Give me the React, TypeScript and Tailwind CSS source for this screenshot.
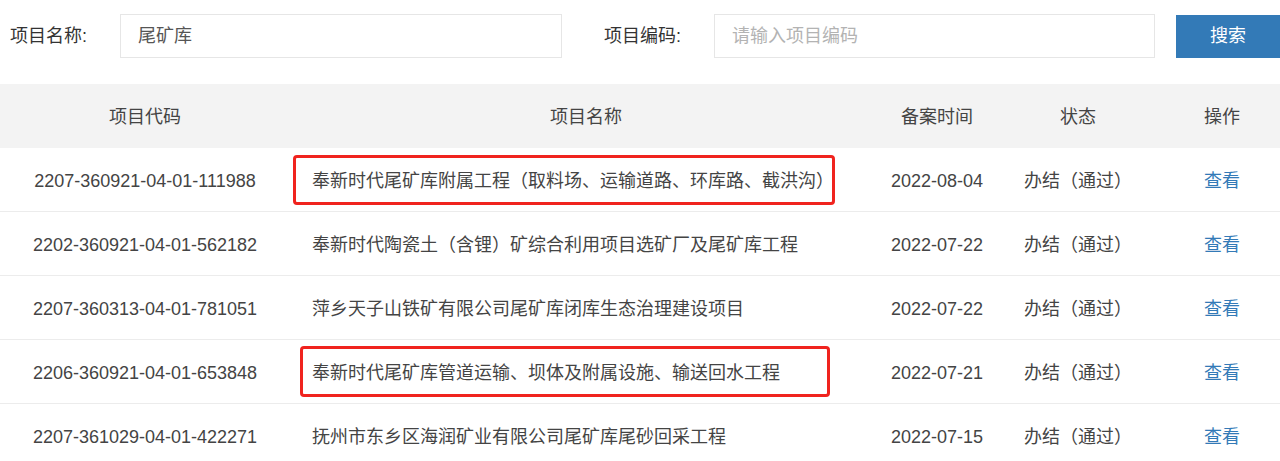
import React from "react";

const rows = [
  { code: "2207-360921-04-01-111988", name: "奉新时代尾矿库附属工程（取料场、运输道路、环库路、截洪沟）", date: "2022-08-04", box: 1 },
  { code: "2202-360921-04-01-562182", name: "奉新时代陶瓷土（含锂）矿综合利用项目选矿厂及尾矿库工程", date: "2022-07-22", box: 0 },
  { code: "2207-360313-04-01-781051", name: "萍乡天子山铁矿有限公司尾矿库闭库生态治理建设项目", date: "2022-07-22", box: 0 },
  { code: "2206-360921-04-01-653848", name: "奉新时代尾矿库管道运输、坝体及附属设施、输送回水工程", date: "2022-07-21", box: 2 },
  { code: "2207-361029-04-01-422271", name: "抚州市东乡区海润矿业有限公司尾矿库尾砂回采工程", date: "2022-07-15", box: 0 },
];

export default function App() {
  return (
    <div
      className="w-[1280px] h-[461px] overflow-hidden bg-white text-[18px] text-[#444]"
      style={{ fontFamily: '"Liberation Sans", "Noto Sans CJK SC", sans-serif' }}
    >
      <div className="flex items-center h-[44px] mt-[14px]">
        <div className="w-[120px] pl-[10px] text-[#333]">项目名称:</div>
        <div className="w-[442px] h-[44px] border border-[#e6e6e6] flex items-center pl-[17px] text-[#555]">尾矿库</div>
        <div className="w-[42px]" />
        <div className="w-[110px] text-[#333]">项目编码:</div>
        <div className="w-[441px] h-[44px] border border-[#e6e6e6] flex items-center pl-[17px] text-[#b3b3b3]">请输入项目编码</div>
        <div className="w-[21px]" />
        <div className="w-[104px] h-[43px] bg-[#337ab7] text-white flex items-center justify-center">搜索</div>
      </div>

      <div className="mt-[26px] flex h-[64px] pt-[3px] items-center bg-[#f3f3f3] text-[#444]">
        <div className="w-[290px] text-center">项目代码</div>
        <div className="w-[592px] text-center">项目名称</div>
        <div className="w-[110px] text-center">备案时间</div>
        <div className="w-[172px] text-center">状态</div>
        <div className="w-[116px] text-center">操作</div>
      </div>

      {rows.map((r) => (
        <div key={r.code} className="flex h-[64px] items-center border-b border-[#ececec]">
          <div className="w-[290px] pt-[3px] text-center">{r.code}</div>
          <div className="w-[592px] h-full pt-[3px] relative flex items-center pl-[22px] whitespace-nowrap">
            {r.name}
            {r.box === 1 && (
              <div className="absolute left-[3px] top-[7px] w-[542px] h-[50px] border-[3px] border-[#f0231e] rounded-[4px]" />
            )}
            {r.box === 2 && (
              <div className="absolute left-[10px] top-[6px] w-[530px] h-[51px] border-[3px] border-[#f0231e] rounded-[4px]" />
            )}
          </div>
          <div className="w-[110px] pt-[3px] text-center">{r.date}</div>
          <div className="w-[172px] pt-[3px] text-center">办结（通过）</div>
          <div className="w-[116px] pt-[3px] text-center text-[#337ab7]">查看</div>
        </div>
      ))}
    </div>
  );
}
